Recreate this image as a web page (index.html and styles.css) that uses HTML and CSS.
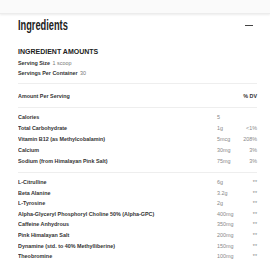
FILE: index.html
```html
<!DOCTYPE html>
<html>
<head>
<meta charset="utf-8">
<link rel="stylesheet" href="styles.css">
</head>
<body>
<div class="topbar"></div>
<div class="panel">
  <div class="head">
    <h1 class="title">Ingredients</h1>
    <span class="minus"></span>
  </div>
  <h2 class="sub">INGREDIENT AMOUNTS</h2>
  <div class="serv">
    <div class="srow"><b>Serving Size</b> 1 scoop</div>
    <div class="srow"><b>Servings Per Container</b> 30</div>
  </div>
  <div class="hdr"><span class="lbl">Amount Per Serving</span><span class="dvh">% DV</span></div>
  <div class="group g1">
    <div class="row"><span class="lbl">Calories</span><span class="val">5</span><span class="dv"></span></div>
    <div class="row"><span class="lbl">Total Carbohydrate</span><span class="val">1g</span><span class="dv">&lt;1%</span></div>
    <div class="row"><span class="lbl">Vitamin B12 (as Methylcobalamin)</span><span class="val">5mcg</span><span class="dv">208%</span></div>
    <div class="row"><span class="lbl">Calcium</span><span class="val">30mg</span><span class="dv">3%</span></div>
    <div class="row"><span class="lbl">Sodium (from Himalayan Pink Salt)</span><span class="val">75mg</span><span class="dv">3%</span></div>
  </div>
  <div class="group g2">
    <div class="row"><span class="lbl">L-Citrulline</span><span class="val">6g</span><span class="dv">**</span></div>
    <div class="row"><span class="lbl">Beta Alanine</span><span class="val">3.2g</span><span class="dv">**</span></div>
    <div class="row"><span class="lbl">L-Tyrosine</span><span class="val">2g</span><span class="dv">**</span></div>
    <div class="row"><span class="lbl">Alpha-Glyceryl Phosphoryl Choline 50% (Alpha-GPC)</span><span class="val">400mg</span><span class="dv">**</span></div>
    <div class="row"><span class="lbl">Caffeine Anhydrous</span><span class="val">350mg</span><span class="dv">**</span></div>
    <div class="row"><span class="lbl">Pink Himalayan Salt</span><span class="val">200mg</span><span class="dv">**</span></div>
    <div class="row"><span class="lbl">Dynamine (std. to 40% Methylliberine)</span><span class="val">150mg</span><span class="dv">**</span></div>
    <div class="row"><span class="lbl">Theobromine</span><span class="val">100mg</span><span class="dv">**</span></div>
  </div>
</div>
</body>
</html>
```
FILE: styles.css
```css
html, body { margin: 0; padding: 0; background: #fff; }
body { font-family: "Liberation Sans", Arial, sans-serif; color: #222; width: 270px; overflow: hidden; }
.topbar { height: 13px; background: #fafafa; box-shadow: 0 1px 2px rgba(0,0,0,0.08); border-bottom: 1px solid #ececec; }
.panel { padding: 0 13px 0 18px; }
.head { display: flex; align-items: center; justify-content: space-between; padding-top: 3px; height: 16px; }
.title { margin: 0; font-family: "Liberation Sans", Arial, sans-serif; font-weight: bold; font-size: 14px; color: #222; transform: scaleX(0.66); transform-origin: left center; white-space: nowrap; }
.minus { width: 8px; height: 1px; background: #444; margin-right: 4px; }
.sub { margin: 14px 0 0; font-size: 7px; font-weight: bold; color: #222; line-height: 9px; }
.serv { margin-top: 2px; padding-bottom: 5px; border-bottom: 1px solid #eee; }
.srow { font-size: 5.4px; line-height: 10px; color: #777; }
.srow b { color: #333; font-weight: bold; margin-right: 1px; }
.hdr { display: flex; justify-content: space-between; font-size: 5.4px; font-weight: bold; color: #333; line-height: 10px; padding: 7px 0 6px; border-bottom: 1px solid #eee; }
.group { padding: 4px 0 5px; }
.g1 { border-bottom: 1px solid #eee; }
.g1 .row { line-height: 11px; }
.row { display: grid; grid-template-columns: 1fr 25px 15px; font-size: 5.4px; line-height: 10.6px; }
.lbl { color: #333; font-weight: bold; white-space: nowrap; overflow: hidden; }
.val { color: #888; }
.dv { color: #888; text-align: right; }
.dvh { color: #333; }
```
